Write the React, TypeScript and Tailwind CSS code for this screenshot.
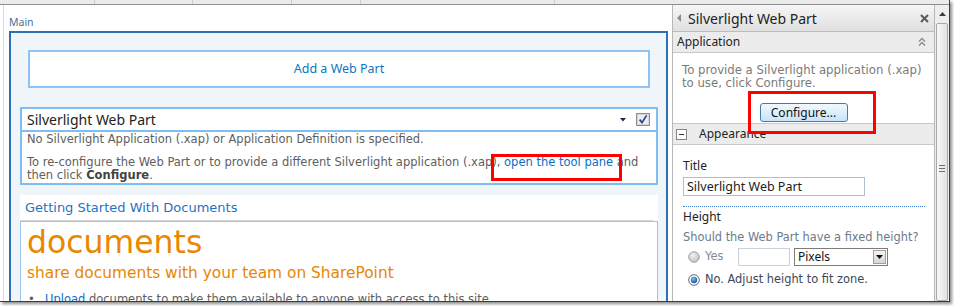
import React from "react";

const verdana = "font-['DejaVu_Sans',Verdana,sans-serif]";
const segoe = "font-['Noto_Sans','Segoe_UI',sans-serif]";

function CheckBox() {
  return (
    <svg width="14" height="13" viewBox="0 0 14 13">
      <rect x="0.5" y="0.5" width="13" height="12" fill="#f3f4f6" stroke="#8e8e8e" />
      <rect x="1.5" y="1.5" width="11" height="10" fill="#e9ecf0" stroke="#d2d6db" />
      <path d="M3.6 6.6 L6 9.6 L10.6 2.4" fill="none" stroke="#2e3f8a" strokeWidth="1.7" />
    </svg>
  );
}

function Radio({ checked }: { checked?: boolean }) {
  return (
    <svg width="12" height="12" viewBox="0 0 12 12">
      <defs>
        <radialGradient id={checked ? "rOn" : "rOff"} cx="40%" cy="35%" r="70%">
          <stop offset="0%" stopColor={checked ? "#7cc6f5" : "#f2f2f2"} />
          <stop offset="100%" stopColor={checked ? "#0d4f8f" : "#bdbdbd"} />
        </radialGradient>
      </defs>
      {checked ? (
        <>
          <circle cx="6" cy="6" r="5.3" fill="#fff" stroke="#5c6a78" />
          <circle cx="6" cy="6" r="3.2" fill="url(#rOn)" />
        </>
      ) : (
        <circle cx="6" cy="6" r="5.3" fill="url(#rOff)" stroke="#a3a3a3" />
      )}
    </svg>
  );
}

function TopStrip() {
  // only the bottoms of the ribbon tabs show above the page
  const cells = ["w-[95px]", "w-[98px]", "w-[99px]", "w-[69px]", "w-[194px]"];
  return (
    <div className="h-[5px] shrink-0 flex overflow-hidden bg-[#ebebeb] border-b border-[#8e8e8e]">
      {cells.map((w, i) => (
        <div key={i} className={`${w} shrink-0 border-r border-[#cdcdcd]`} />
      ))}
      <div className="flex-1" />
    </div>
  );
}

function PageArea() {
  return (
    <div className="w-[672px] shrink-0 pl-[3px]">
      <div className="h-full border-l border-[#d3dde8] pl-[5px]">
        <div className={`${segoe} text-[10.5px] leading-[14px] text-[#4d6f96] pt-[10px] pb-[2px]`}>Main</div>

        {/* zone */}
        <div className="w-[659px] h-[300px] border-2 border-[#2f6fb2] bg-[#f0f5fa] pt-[17px] pl-[9px] pr-[8px]">
          <div className="mx-[8px] h-[38px] border-2 border-[#8ec4f5] bg-white flex items-center justify-center">
            <span className={`${segoe} text-[12.5px] text-[#0f75c2]`}>Add a Web Part</span>
          </div>

          {/* Silverlight web part */}
          <div className="mt-[19px] border-2 border-[#80bdf0] bg-white">
            <div className="h-[23px] flex items-center pl-[5px] pr-[6px] border-b-2 border-[#80bdf0]">
              <span className={`${segoe} text-[14px] text-[#222]`}>Silverlight Web Part</span>
              <svg className="ml-auto" width="6" height="4" viewBox="0 0 6 4">
                <polygon points="0,0 6,0 3,3.5" fill="#1c2b4a" />
              </svg>
              <div className="ml-[10px] flex">
                <CheckBox />
              </div>
            </div>
            <div className={`${verdana} text-[11.5px] leading-[13px] text-[#5e5e5e] px-[5px] pt-[1px] pb-[1px] whitespace-nowrap`}>
              <p>No Silverlight Application (.xap) or Application Definition is specified.</p>
              <p className="mt-[10px]">
                To re-configure the Web Part or to provide a different Silverlight application (.xap),{" "}
                <span className="text-[#0a6ec4]">open the tool pane</span> and
                <br />
                then click <b className="font-bold text-[#444]">Configure</b>.
              </p>
            </div>
          </div>

          {/* Getting started */}
          <div className="mt-[10px] bg-white">
            <div className={`${verdana} mr-[5px] border-b border-[#d6d6d6] pl-[5px] pt-[5px] pb-[4px] text-[13px] leading-[16px] text-[#1f73bf]`}>
              Getting Started With Documents
            </div>
            <div className="h-[200px] border border-[#99c7f1] pl-[6px] pt-[3px]">
              <div className={`${verdana} text-[31.5px] leading-[34px] text-[#e98700]`}>documents</div>
              <div className={`${verdana} mt-[4px] text-[15.4px] leading-[20px] text-[#e98700]`}>
                share documents with your team on SharePoint
              </div>
              <div className={`${verdana} mt-[10px] flex text-[11.5px] leading-[13px] text-[#5e5e5e] whitespace-nowrap`}>
                <span className="ml-[1px] w-[17px]">•</span>
                <span>
                  <span className="text-[#0f6fc6] underline">Upload</span> documents to make them available to anyone with access to this site.
                </span>
              </div>
            </div>
          </div>
        </div>
      </div>
    </div>
  );
}

function ToolPane() {
  return (
    <div className="w-[263px] shrink-0 flex flex-col border-l border-r border-[#b7b7b7] bg-white">
      {/* header */}
      <div className="h-[27px] shrink-0 flex items-center pl-[4px] pr-[5px] border-b border-[#bcbcbc] bg-linear-to-b from-[#f6f6f6] to-[#e0e0e0]">
        <svg width="4" height="8" viewBox="0 0 4 8">
          <polygon points="4,0 4,8 0,4" fill="#8a8a8a" />
        </svg>
        <span className={`${segoe} ml-[7px] text-[14px] text-[#222]`}>Silverlight Web Part</span>
        <svg className="ml-auto" width="9" height="9" viewBox="0 0 9 9">
          <path d="M1 1 L8 8 M8 1 L1 8" stroke="#5a5a5a" strokeWidth="2" />
        </svg>
      </div>

      {/* Application */}
      <div className="h-[21px] shrink-0 flex items-center pl-[4px] pr-[8px] border-b border-[#c9c9c9] bg-[#ececec]">
        <span className={`${segoe} text-[12px] text-[#222]`}>Application</span>
        <svg className="ml-auto" width="8" height="10" viewBox="0 0 8 10">
          <polyline points="1,4.5 4,1.5 7,4.5" fill="none" stroke="#8a8a8a" strokeWidth="1.3" />
          <polyline points="1,8.5 4,5.5 7,8.5" fill="none" stroke="#8a8a8a" strokeWidth="1.3" />
        </svg>
      </div>

      <div className="shrink-0 pl-[9px] pr-[4px] pt-[11px] pb-[1px]">
        <p className={`${verdana} text-[11.7px] leading-[13px] text-[#7a7a7a] whitespace-nowrap`}>
          To provide a Silverlight application (.xap)
          <br />
          to use, click Configure.
        </p>
        <div className="mt-[13px] flex justify-center pr-[5px]">
          <button className={`${segoe} w-[88px] h-[19px] rounded-[3px] border border-[#3c7fb1] bg-linear-to-b from-[#f2f9fe] to-[#c8e4f9] text-[12px] leading-[17px] text-[#111]`}>
            Configure...
          </button>
        </div>
      </div>

      {/* Appearance */}
      <div className="h-[22px] shrink-0 flex items-center pl-[3px] border-y border-[#c9c9c9] bg-[#ececec]">
        <svg width="11" height="11" viewBox="0 0 11 11">
          <rect x="0.5" y="0.5" width="10" height="10" fill="#fff" stroke="#858585" />
          <path d="M3 5.5 H8" stroke="#333" strokeWidth="1" />
        </svg>
        <span className={`${segoe} ml-[12px] text-[12px] text-[#222]`}>Appearance</span>
      </div>

      <div className="pl-[10px] pr-[9px] pt-[13px]">
        <div className={`${segoe} text-[12px] leading-[16px] text-[#222]`}>Title</div>
        <div className={`${segoe} mt-[3px] w-[182px] h-[19px] border border-[#abbfd3] pl-[3px] text-[12.5px] leading-[17px] text-[#222]`}>
          Silverlight Web Part
        </div>
        <div className="mt-[10px] border-t border-dotted border-[#3f77c8]" />
        <div className={`${segoe} pt-[2px] text-[12px] leading-[16px] text-[#222]`}>Height</div>
        <div className={`${verdana} mt-[6px] text-[11.4px] leading-[13px] text-[#6b7b8d] whitespace-nowrap`}>
          Should the Web Part have a fixed height?
        </div>
        <div className="mt-[4px] h-[18px] flex items-center pl-[5px]">
          <Radio />
          <span className={`${verdana} ml-[5px] w-[33px] text-[11.4px] text-[#7d8b99]`}>Yes</span>
          <div className="w-[52px] h-[18px] border border-[#c9d2db] bg-white" />
          <div className="ml-[4px] w-[94px] h-[18px] flex items-center border border-[#7c7c7c] bg-white">
            <span className={`${segoe} pl-[3px] text-[12px] text-[#111]`}>Pixels</span>
            <div className="ml-auto mr-[1px] w-[13px] h-[14px] flex items-center justify-center border border-[#a0a0a0] bg-linear-to-b from-[#f4f4f4] to-[#d6d6d6]">
              <svg width="7" height="4" viewBox="0 0 7 4">
                <polygon points="0,0 7,0 3.5,4" fill="#111" />
              </svg>
            </div>
          </div>
        </div>
        <div className="mt-[6px] h-[16px] flex items-center pl-[5px]">
          <Radio checked />
          <span className={`${verdana} ml-[5px] text-[11.4px] text-[#3c4856] whitespace-nowrap`}>No. Adjust height to fit zone.</span>
        </div>
      </div>
    </div>
  );
}

function ScrollBar() {
  return (
    <div className="w-[14px] shrink-0 flex flex-col bg-[#eeeeee]">
      <div className="h-[18px] shrink-0 flex items-center justify-center">
        <svg width="7" height="4" viewBox="0 0 7 4">
          <polygon points="0,4 3.5,0 7,4" fill="#3d3d3d" />
        </svg>
      </div>
      <div className="flex-1 mx-[1px] pt-[12px] flex flex-col items-center justify-center gap-[2px] rounded-[2px] border border-[#a9a9a9] bg-linear-to-r from-[#f8f8f8] to-[#e2e2e2]">
        <div className="w-[6px] h-px bg-[#6e6e6e]" />
        <div className="w-[6px] h-px bg-[#6e6e6e]" />
        <div className="w-[6px] h-px bg-[#6e6e6e]" />
      </div>
    </div>
  );
}

export default function App() {
  return (
    <div className="relative w-[954px] h-[306px] overflow-hidden bg-white">
      <div className="flex flex-col w-[950px] h-[302px] overflow-hidden bg-white border-r border-b border-[#3d3d3d] shadow-[2px_2px_3px_rgba(0,0,0,0.45)]">
        <TopStrip />
        <div className="flex flex-1 min-h-0">
          <PageArea />
          <ToolPane />
          <ScrollBar />
        </div>
      </div>

      {/* red annotation boxes */}
      <div className="absolute left-[491px] top-[154px] w-[131px] h-[27px] border-[3px] border-[#ff0000]" />
      <div className="absolute left-[748px] top-[91px] w-[128px] h-[43px] border-[3px] border-[#ff0000]" />
    </div>
  );
}
